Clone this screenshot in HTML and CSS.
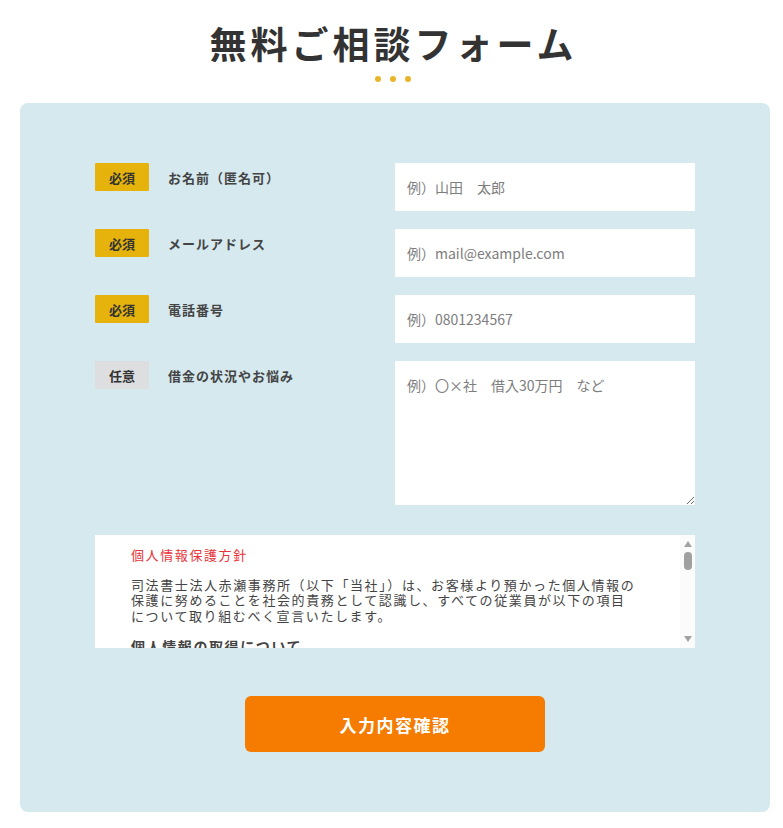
FILE: index.html
```html
<!DOCTYPE html>
<html lang="ja">
<head>
<meta charset="utf-8">
<title>無料ご相談フォーム</title>
<link rel="stylesheet" href="styles.css">
</head>
<body>
<h1 class="title">無料ご相談フォーム</h1>
<div class="dots"><span></span><span></span><span></span></div>
<form class="panel">
  <div class="row">
    <div class="label-col"><span class="badge req">必須</span><span class="label">お名前（匿名可）</span></div>
    <input class="field" type="text" placeholder="例）山田　太郎">
  </div>
  <div class="row">
    <div class="label-col"><span class="badge req">必須</span><span class="label">メールアドレス</span></div>
    <input class="field" type="text" placeholder="例）mail@example.com">
  </div>
  <div class="row">
    <div class="label-col"><span class="badge req">必須</span><span class="label">電話番号</span></div>
    <input class="field" type="text" placeholder="例）0801234567">
  </div>
  <div class="row">
    <div class="label-col"><span class="badge opt">任意</span><span class="label">借金の状況やお悩み</span></div>
    <textarea class="area" placeholder="例）〇×社　借入30万円　など"></textarea>
  </div>
  <div class="policy">
    <div class="policy-scroll">
      <p class="policy-title">個人情報保護方針</p>
      <p class="policy-text">司法書士法人赤瀬事務所（以下「当社」）は、お客様より預かった個人情報の<br>保護に努めることを社会的責務として認識し、すべての従業員が以下の項目<br>について取り組むべく宣言いたします。</p>
      <p class="policy-head">個人情報の取得について</p>
      <p class="policy-text">当社は、偽りその他不正の手段によらず適正に個人情報を取得いたします。</p>
    </div>
    <div class="scrollbar" aria-hidden="true">
      <span class="arrow up"></span>
      <span class="track"><span class="thumb"></span></span>
      <span class="arrow down"></span>
    </div>
  </div>
  <div class="actions">
    <button class="submit" type="button">入力内容確認</button>
  </div>
</form>
</body>
</html>
```
FILE: styles.css
```css
html, body {
  margin: 0;
  padding: 0;
  background: #ffffff;
}
body {
  font-family: "Noto Sans CJK JP", "Noto Sans", sans-serif;
  color: #333333;
}
.title {
  margin: 18px 0 0;
  text-align: center;
  font-size: 37px;
  line-height: 50px;
  font-weight: 700;
  letter-spacing: 4px;
  padding-left: 4px;
  color: #333333;
}
.dots {
  display: flex;
  justify-content: center;
  gap: 9px;
  margin-top: 8px;
  padding-left: 2px;
}
.dots span {
  width: 6px;
  height: 6px;
  border-radius: 50%;
  background: #e8b52a;
}
.panel {
  box-sizing: border-box;
  width: 750px;
  margin: 21px 0 0 20px;
  padding: 60px 75px;
  background: #d5e9ef;
  border-radius: 8px;
  display: flex;
  flex-direction: column;
  gap: 18px;
}
.row {
  display: grid;
  grid-template-columns: 300px 300px;
  align-items: start;
}
.label-col {
  display: flex;
  align-items: center;
  gap: 19px;
}
.badge {
  width: 54px;
  height: 28px;
  display: flex;
  align-items: center;
  justify-content: center;
  font-size: 13px;
  font-weight: 700;
  color: #333333;
  border-radius: 1px;
}
.badge.req {
  background: #e6b30c;
}
.badge.opt {
  background: #dcdedf;
}
.label {
  font-size: 13px;
  font-weight: 700;
  letter-spacing: 1px;
  color: #444444;
}
.field,
.area {
  box-sizing: border-box;
  width: 300px;
  border: none;
  outline: none;
  background: #ffffff;
  font-family: "Noto Sans CJK JP", "Noto Sans", sans-serif;
  font-size: 14px;
  color: #333333;
  margin: 0;
  border-radius: 1px;
}
.field {
  height: 48px;
  padding: 0 12px;
}
.area {
  height: 144px;
  padding: 14px 12px;
  line-height: 20px;
  display: block;
}
.field::placeholder,
.area::placeholder {
  color: #7d7d7d;
}
.policy {
  position: relative;
  height: 113px;
  margin-top: 12px;
  background: #ffffff;
}
.policy-scroll {
  box-sizing: border-box;
  height: 100%;
  overflow: hidden;
  padding: 12px 30px 0 36px;
  font-size: 13px;
  line-height: 15.6px;
  letter-spacing: 1.6px;
  color: #444444;
}
.policy-scroll p {
  margin: 0;
  white-space: nowrap;
}
.policy-title {
  color: #e8343a;
  margin-bottom: 14px !important;
}
.policy-head {
  font-weight: 700;
  font-size: 14px;
  margin-top: 16px !important;
  margin-bottom: 6px !important;
}
.scrollbar {
  position: absolute;
  top: 0;
  right: 0;
  bottom: 0;
  width: 15px;
  background: #fbfbfb;
  display: flex;
  flex-direction: column;
  align-items: center;
}
.arrow {
  width: 0;
  height: 0;
  border-left: 4px solid transparent;
  border-right: 4px solid transparent;
}
.arrow.up {
  margin-top: 6px;
  border-bottom: 6px solid #a3a3a3;
}
.arrow.down {
  margin-bottom: 6px;
  border-top: 6px solid #a3a3a3;
}
.track {
  flex: 1;
  width: 100%;
  display: flex;
  justify-content: center;
  padding-top: 5px;
}
.thumb {
  width: 8px;
  height: 18px;
  border-radius: 4px;
  background: #a0a0a0;
}
.actions {
  display: flex;
  justify-content: center;
  margin-top: 30px;
}
.submit {
  width: 300px;
  height: 56px;
  border: none;
  border-radius: 6px;
  background: #f57c00;
  color: #ffffff;
  font-family: "Noto Sans CJK JP", "Noto Sans", sans-serif;
  font-size: 17px;
  font-weight: 700;
  letter-spacing: 1.5px;
  cursor: pointer;
}
```
